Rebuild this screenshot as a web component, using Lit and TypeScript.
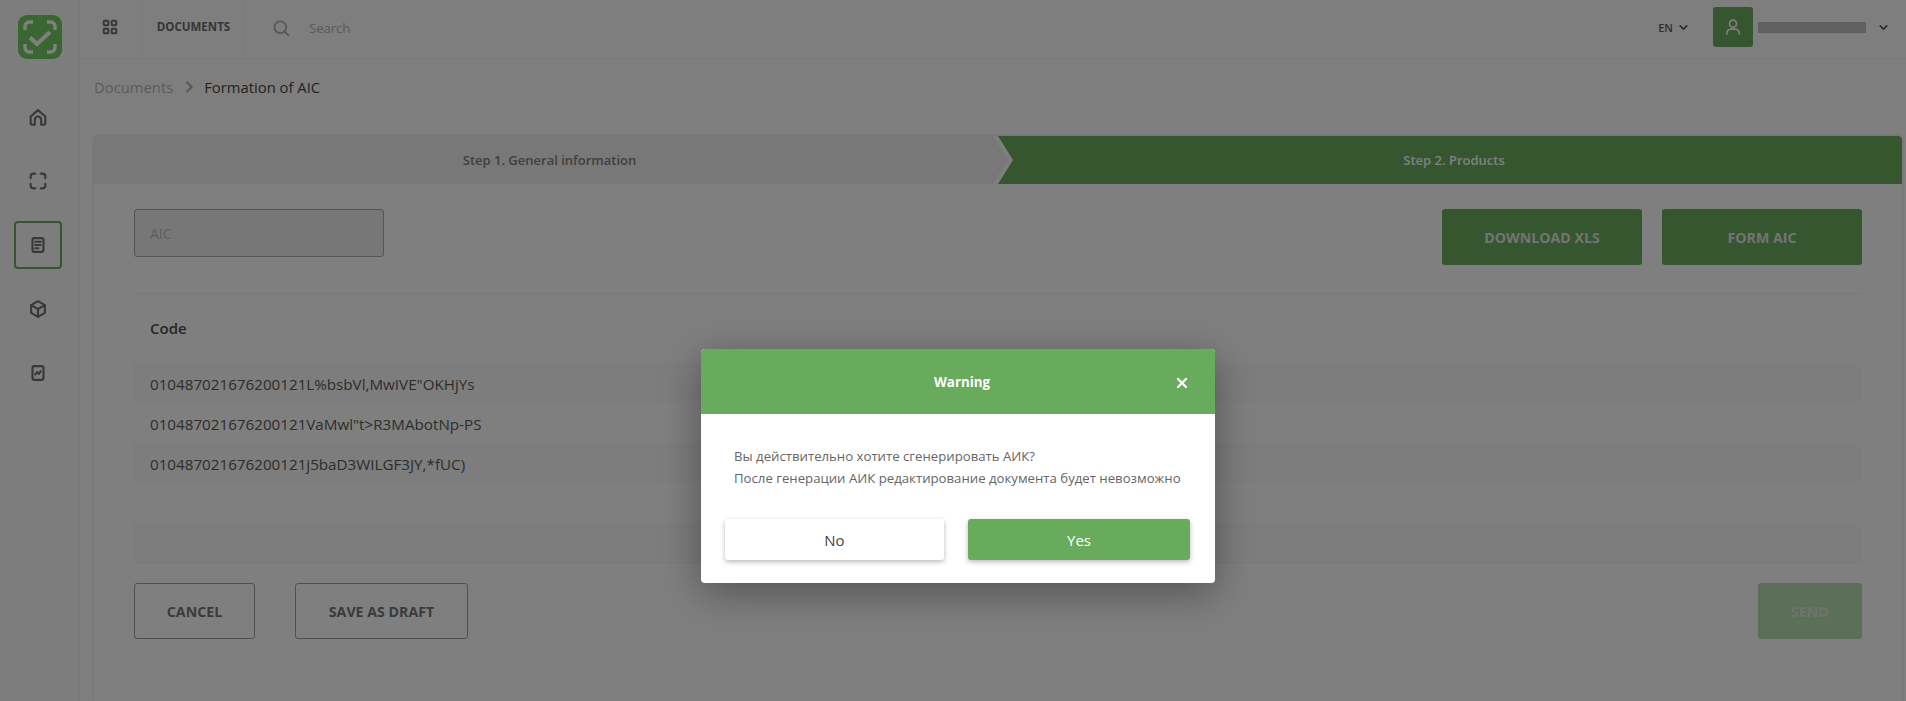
import { LitElement, html, css, svg } from "lit";
import { customElement } from "lit/decorators.js";

const icon = (body: unknown, size = 24, sw = 2) => html`<svg width=${size} height=${size} viewBox="0 0 24 24" fill="none" stroke="currentColor" stroke-width=${sw} stroke-linecap="round" stroke-linejoin="round">${body}</svg>`;

const rows = [
  { code: '010487021676200121L%bsbVl,MwIVE"OKHjYs', alt: true },
  { code: '010487021676200121VaMwl"t>R3MAbotNp-PS', alt: false },
  { code: "010487021676200121j5baD3WILGF3JY,*fUC)", alt: true },
  { code: "", alt: false },
  { code: "", alt: true },
];

@customElement("app-root")
export class AppRoot extends LitElement {
  static styles = css`
    :host { display: block; height: 701px; overflow: hidden; position: relative; font-family: "Open Sans", "Noto Sans", sans-serif; color: #4a4a4a; background: #fff; }
    * { box-sizing: border-box; }
    .page { display: flex; height: 701px; background: #fdfdfd; }
    .side { width: 80px; flex: none; background: #fbfbfb; border-right: 1px solid #f2f2f2; display: flex; flex-direction: column; align-items: center; padding: 15px 4px 0 0; color: #707070; }
    .logo { width: 44px; height: 44px; flex: none; display: block; margin: 0 0 34px 4px; }
    .nav { width: 48px; height: 48px; flex: none; display: flex; align-items: center; justify-content: center; margin-bottom: 16px; border-radius: 4px; border: 2px solid transparent; }
    .nav.on { border-color: #6aac5c; }
    .main { flex: 1; min-width: 0; display: flex; flex-direction: column; }
    .top { height: 59px; flex: none; display: flex; align-items: stretch; border-bottom: 1px solid #f5f5f5; background: #fdfdfd; }
    .cell { display: flex; align-items: center; justify-content: center; border-right: 1px solid #f3f3f3; height: 56px; color: #707070; }
    .grid { width: 63px; padding: 0 3px 3px 0; }
    .docs { width: 102px; font-size: 11.5px; font-weight: 700; color: #6c6c6c; padding-bottom: 3px; }
    .search { display: flex; align-items: center; flex: 1; padding-left: 27px; height: 56px; color: #b0b0b0; font-size: 13px; }
    .search span { margin-left: 18px; color: #b4b4b4; }
    .lang { display: flex; align-items: center; gap: 4px; font-size: 11px; font-weight: 600; color: #5a5a5a; margin-right: 23px; padding-bottom: 4px; }
    .user { display: flex; align-items: center; margin-right: 16px; padding-bottom: 4px; color: #5a5a5a; }
    .ava { width: 40px; height: 40px; border-radius: 3px; background: #6aac5c; color: #fff; display: flex; align-items: center; justify-content: center; margin-right: 5px; }
    .mask { width: 108px; height: 11px; background: #c0c0c0; margin-right: 11px; }
    .crumbs { display: flex; align-items: center; height: 28px; margin: 14px 0 0 14px; font-size: 14.8px; flex: none; }
    .crumbs .a { color: #b5b5b5; }
    .crumbs .sep { margin: 0 7px 0 8px; color: #aaa; display: flex; }
    .crumbs .b { color: #444; }
    .card { margin: 35px 4px 0 14px; flex: 1; background: #fff; border-radius: 4px 4px 0 0; box-shadow: 0 0 3px rgba(0,0,0,.18); }
    .steps { display: flex; height: 48px; font-size: 13px; font-weight: 600; background: #fff; border-radius: 4px 4px 0 0; overflow: hidden; }
    .step { display: flex; align-items: center; justify-content: center; }
    .step.first { width: calc(50% + 10px); flex: none; padding-right: 3px; background: #f0f0f0; color: #808080; clip-path: polygon(0 0, calc(100% - 15px) 0, 100% 50%, calc(100% - 15px) 100%, 0 100%); }
    .step.act { flex: 1; margin-left: -10px; padding-left: 8px; background: #6aac5c; color: #fff; clip-path: polygon(0 0, 100% 0, 100% 100%, 0 100%, 15px 50%); }
    .body { padding: 25px 40px 0; }
    .toolbar { display: flex; align-items: flex-start; height: 56px; }
    .input { width: 250px; height: 48px; border: 1px solid #aaa; background: #eeeeee; border-radius: 3px; font-size: 14px; color: #bdbdbd; padding-left: 15px; display: flex; align-items: center; }
    .spacer { flex: 1; }
    .btn { display: flex; align-items: center; justify-content: center; height: 56px; border-radius: 3px; font-size: 14.2px; font-weight: 700; }
    .btn.fill { background: #6aac5c; color: #e6e6e6; width: 200px; }
    .btn.line { border: 1px solid #a0a0a0; color: #777; }
    .gap { margin-left: 20px; }
    .rule { border-top: 1px solid #f3f3f3; margin-top: 28px; }
    .hd { padding: 23px 16px 0; height: 68px; font-size: 15px; font-weight: 600; color: #4d4d4d; line-height: 22px; }
    .row { height: 40px; padding: 3px 16px 0; display: flex; align-items: center; font-size: 15.2px; color: #5a5a5a; }
    .row.alt { background: #fafafa; }
    .foot { display: flex; padding-top: 20px; border-top: 1px solid #f3f3f3; }
    .cancel { width: 121px; }
    .draft { width: 173px; margin-left: 40px; }
    .send { background: #b8deb0; color: #dfe7dd; width: 104px; }
    .over { position: absolute; inset: 0; background: rgba(0,0,0,.5); }
    .modal { position: absolute; left: 701px; top: 349px; width: 514px; height: 234px; background: #fff; border-radius: 4px; overflow: hidden; box-shadow: 0 10px 40px rgba(0,0,0,.35); }
    .mh { height: 65px; background: #69ab5d; color: #fff; display: flex; align-items: center; justify-content: center; font-size: 13.3px; font-weight: 700; position: relative; padding-left: 8px; }
    .x { position: absolute; right: 25px; top: 26px; display: flex; }
    .mt { padding: 32px 0 0 33px; font-size: 13.2px; line-height: 21.5px; color: #666; height: 105px; white-space: nowrap; }
    .ma { display: flex; padding-left: 24px; }
    .mb { height: 41px; padding-top: 1px; border-radius: 3px; display: flex; align-items: center; justify-content: center; font-size: 15px; box-shadow: 0 2px 5px rgba(0,0,0,.28); }
    .no { width: 219px; background: #fff; color: #444; }
    .yes { width: 222px; margin-left: 24px; background: #69ab5d; color: #fff; }
  `;

  render() {
    return html`
      <div class="page">
        <aside class="side">
          <svg class="logo" viewBox="0 0 44 44">
            <rect width="44" height="44" rx="9" fill="#74cc62"/>
            <path d="M7 15V11.500A4.500 4.500 0 0 1 11.500 7H15M29 7h3.500A4.500 4.500 0 0 1 37 11.500V15M37 29v3.500a4.500 4.500 0 0 1-4.500 4.500H29M15 37h-3.500A4.500 4.500 0 0 1 7 32.500V29" fill="none" stroke="#fff" stroke-width="3.400"/>
            <path d="M12 22.500l7 6.500 13-12" fill="none" stroke="#fff" stroke-width="4.200"/>
          </svg>
          <div class="nav">${icon(svg`<path d="M4 11.500 12 4.500l8 7V18a2.500 2.500 0 0 1-2.500 2.500H15.500V15a3.500 3.500 0 0 0-7 0v5.500H6.500A2.500 2.500 0 0 1 4 18z"/>`, 22, 2.3)}</div>
          <div class="nav">${icon(svg`<path d="M4 9V7a3 3 0 0 1 3-3h2M15 4h2a3 3 0 0 1 3 3v2M20 15v2a3 3 0 0 1-3 3h-2M9 20H7a3 3 0 0 1-3-3v-2"/>`, 22, 2.3)}</div>
          <div class="nav on">${icon(svg`<rect x="6" y="4.500" width="12" height="15" rx="2"/><path d="M9 8.500h6M9 12h6M9 15.500h3.500"/>`, 22, 2.3)}</div>
          <div class="nav">${icon(svg`<path d="M12 3.500l7.500 4.300v8.400L12 20.500l-7.500-4.300V7.800z"/><path d="M4.800 8 12 12l7.200-4M12 12v8.500"/>`, 22, 2.3)}</div>
          <div class="nav">${icon(svg`<rect x="6" y="4.500" width="12" height="15" rx="2"/><path d="M9 13.500l2-2.500 2 2 2-3"/>`, 22, 2.3)}</div>
        </aside>
        <div class="main">
          <header class="top">
            <div class="cell grid">${icon(svg`<rect x="4.500" y="4.500" width="5.500" height="5.500" rx="1"/><rect x="14" y="4.500" width="5.500" height="5.500" rx="1"/><rect x="4.500" y="14" width="5.500" height="5.500" rx="1"/><rect x="14" y="14" width="5.500" height="5.500" rx="1"/>`, 20, 2.4)}</div>
            <div class="cell docs">DOCUMENTS</div>
            <div class="search">${icon(svg`<circle cx="10.500" cy="10.500" r="7.500"/><path d="M16 16l5 5"/>`, 19, 2.3)}<span>Search</span></div>
            <div class="lang">EN ${icon(svg`<path d="M6 9l6 6 6-6"/>`, 13, 3.2)}</div>
            <div class="user">
              <div class="ava">${icon(svg`<circle cx="12" cy="8" r="4.200"/><path d="M4.500 20.500v-1.500a5.500 5.500 0 0 1 5-4.500h5a5.500 5.500 0 0 1 5 4.500v1.500"/>`, 20)}</div>
              <div class="mask"></div>
              ${icon(svg`<path d="M6 9l6 6 6-6"/>`, 13, 3.2)}
            </div>
          </header>
          <nav class="crumbs">
            <span class="a">Documents</span>
            <span class="sep">${icon(svg`<path d="M9 5l7 7-7 7"/>`, 16, 3)}</span>
            <span class="b">Formation of AIC</span>
          </nav>
          <section class="card">
            <div class="steps">
              <div class="step first">Step 1. General information</div>
              <div class="step act">Step 2. Products</div>
            </div>
            <div class="body">
              <div class="toolbar">
                <div class="input">AIC</div>
                <div class="spacer"></div>
                <div class="btn fill">DOWNLOAD XLS</div>
                <div class="btn fill gap">FORM AIC</div>
              </div>
              <div class="rule"></div>
              <div class="hd">Code</div>
              ${rows.map((r) => html`<div class="row ${r.alt ? "alt" : ""}">${r.code}</div>`)}
              <div class="foot">
                <div class="btn line cancel">CANCEL</div>
                <div class="btn line draft">SAVE AS DRAFT</div>
                <div class="spacer"></div>
                <div class="btn send">SEND</div>
              </div>
            </div>
          </section>
        </div>
      </div>
      <div class="over"></div>
      <div class="modal">
        <div class="mh">Warning<span class="x">${icon(svg`<path d="M6 6l12 12M18 6 6 18"/>`, 16, 3.5)}</span></div>
        <div class="mt">Вы действительно хотите сгенерировать АИК?<br>После генерации АИК редактирование документа будет невозможно</div>
        <div class="ma">
          <div class="mb no">No</div>
          <div class="mb yes">Yes</div>
        </div>
      </div>
    `;
  }
}
